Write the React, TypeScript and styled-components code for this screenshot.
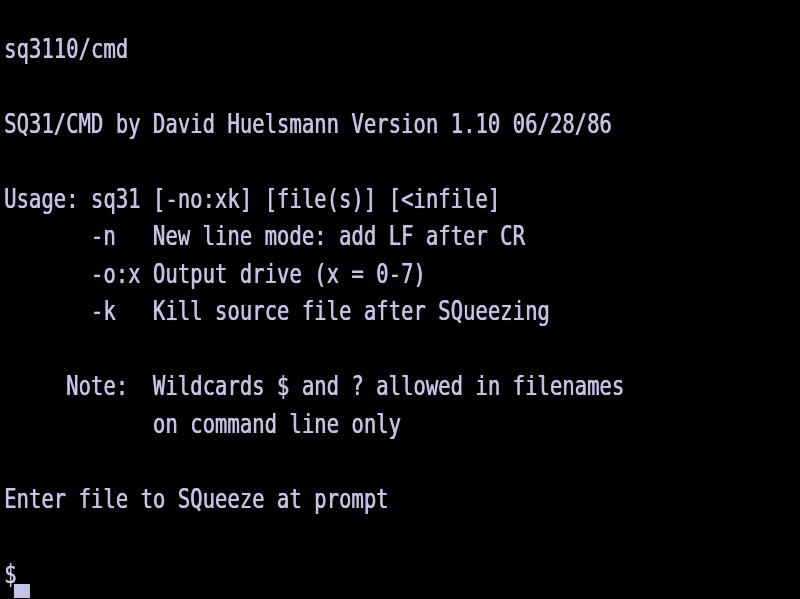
import React from "react";
import styled, { createGlobalStyle } from "styled-components";

const Global = createGlobalStyle`
  html, body {
    margin: 0;
    padding: 0;
    background: #000;
    overflow: hidden;
  }
`;

const Screen = styled.div`
  width: 800px;
  height: 599px;
  background: #000;
  display: grid;
  grid-template-rows: repeat(16, 37.5px);
  padding-left: 4px;
  box-sizing: border-box;
  overflow: hidden;
`;

const Line = styled.div`
  font-family: "DejaVu Sans Mono", "Liberation Mono", monospace;
  font-size: 27px;
  line-height: 22px;
  color: #c6c4e6;
  white-space: pre;
  transform: scaleX(0.763);
  transform-origin: 0 0;
  text-shadow: 0.6px 0 0 rgba(198, 196, 230, 0.8), 0 0 1px rgba(198, 196, 230, 0.6);
  filter: blur(0.35px);
`;

const Cursor = styled.span`
  display: inline-block;
  width: 21px;
  height: 14px;
  margin-left: -3px;
  vertical-align: -15px;
  background: #c6c4e6;
`;

const lines: string[] = [
  "",
  "sq3110/cmd",
  "",
  "SQ31/CMD by David Huelsmann Version 1.10 06/28/86",
  "",
  "Usage: sq31 [-no:xk] [file(s)] [<infile]",
  "       -n   New line mode: add LF after CR",
  "       -o:x Output drive (x = 0-7)",
  "       -k   Kill source file after SQueezing",
  "",
  "     Note:  Wildcards $ and ? allowed in filenames",
  "            on command line only",
  "",
  "Enter file to SQueeze at prompt",
  "",
];

export default function App() {
  return (
    <>
      <Global />
      <Screen>
        {lines.map((l, i) => (
          <Line key={i}>{l}</Line>
        ))}
        <Line>
          $<Cursor />
        </Line>
      </Screen>
    </>
  );
}
